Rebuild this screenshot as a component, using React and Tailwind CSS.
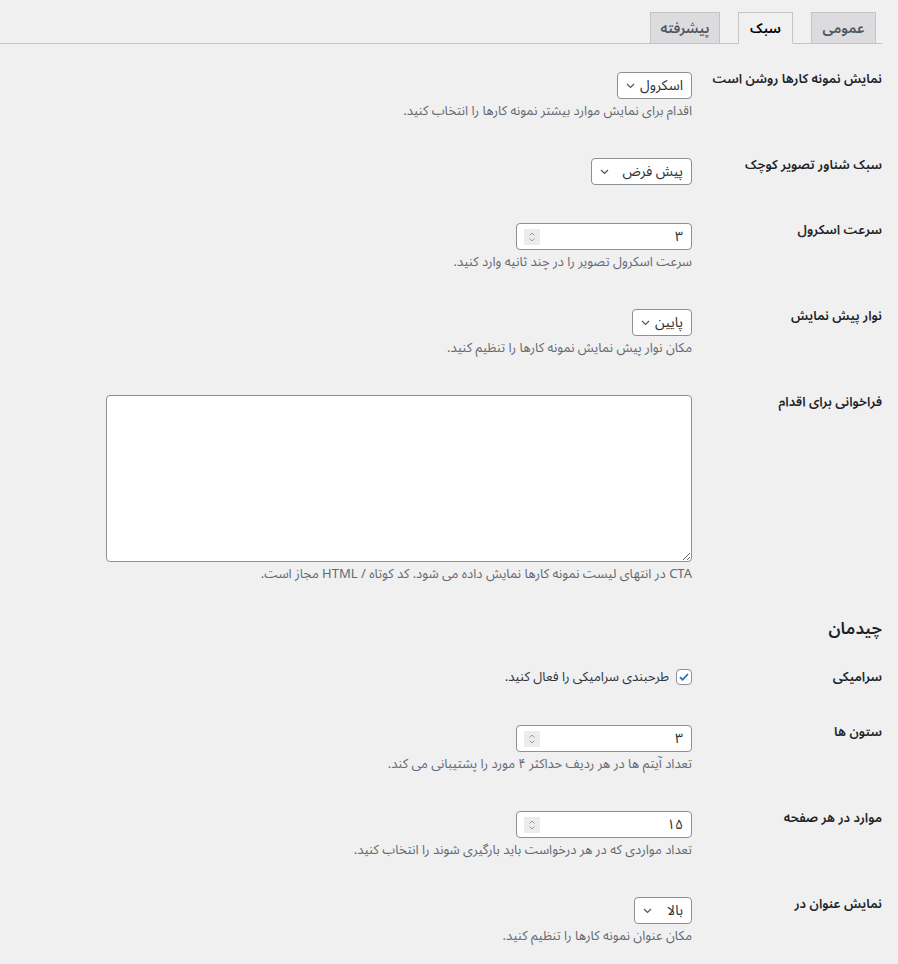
import React from 'react';

const font = { fontFamily: '"Noto Sans Arabic", "DejaVu Sans", sans-serif' };

const Chevron = () => (
    <svg width="9" height="6" viewBox="0 0 9 6" fill="none" className="shrink-0">
        <path d="M1 1l3.5 3.5L8 1" stroke="#50575e" strokeWidth="1.2" />
    </svg>
);

const Select = ({ value, width }) => (
    <div className={`flex h-[27px] items-center justify-between gap-[5px] rounded-[4px] border border-[#8c8f94] bg-white pr-[8px] pl-[8px] text-[14px] text-[#2c3338] ${width}`}>
        <span className="leading-[18px] whitespace-nowrap">{value}</span>
        <Chevron />
    </div>
);

const NumberInput = ({ value }) => (
    <div className="flex h-[27px] w-[176px] items-center justify-between rounded-[4px] border border-[#8c8f94] bg-white pr-[8px] pl-[7px] text-[14px] text-[#2c3338]">
        <span className="leading-[18px]">{value}</span>
        <div className="flex h-[16px] w-[16px] flex-col items-center justify-center gap-[2px] bg-[#ececec]">
            <svg width="6" height="4" viewBox="0 0 6 4" fill="none">
                <path d="M0.5 3.5L3 1l2.5 2.5" stroke="#8c8f94" strokeWidth="0.9" />
            </svg>
            <svg width="6" height="4" viewBox="0 0 6 4" fill="none">
                <path d="M0.5 0.5L3 3l2.5-2.5" stroke="#8c8f94" strokeWidth="0.9" />
            </svg>
        </div>
    </div>
);

const Description = ({ children }) => (
    <p className="mt-[4px] text-[13px] leading-[17px] text-[#646970]">{children}</p>
);

const Row = ({ label, labelTop = 'pt-[12px]', children }) => (
    <div className="flex">
        <div className={`w-[190px] shrink-0 text-[13px] leading-5 font-semibold text-[#1d2327] ${labelTop}`}>
            {label}
        </div>
        <div className="pt-[15px] pb-[23px]">{children}</div>
    </div>
);

const Tab = ({ label, active, width }) => (
    <div
        className={`-mb-px flex h-[32px] items-center justify-center border text-[14px] font-semibold ${width} ${
            active
                ? 'border-[#c3c4c7] border-b-[#f0f0f1] bg-[#f0f0f1] text-black'
                : 'border-[#c3c4c7] bg-[#dcdcde] text-[#50575e]'
        }`}
    >
        {label}
    </div>
);

export default function App() {
    return (
        <div dir="rtl" style={font} className="min-h-screen bg-[#f0f0f1] pr-4">
            <nav className="flex gap-[18px] border-b border-[#c3c4c7] pt-3 pr-[6px]">
                <Tab label="عمومی" width="w-[65px]" />
                <Tab label="سبک" width="w-[55px]" active />
                <Tab label="پیشرفته" width="w-[70px]" />
            </nav>

            <div className="pt-[13px]">
                <Row label="نمایش نمونه کارها روشن است">
                    <Select value="اسکرول" width="min-w-[68px] w-fit" />
                    <Description>اقدام برای نمایش موارد بیشتر نمونه کارها را انتخاب کنید.</Description>
                </Row>

                <Row label="سبک شناور تصویر کوچک">
                    <Select value="پیش فرض" width="w-[101px]" />
                </Row>

                <Row label="سرعت اسکرول">
                    <NumberInput value="۳" />
                    <Description>سرعت اسکرول تصویر را در چند ثانیه وارد کنید.</Description>
                </Row>

                <Row label="نوار پیش نمایش">
                    <Select value="پایین" width="min-w-[58px] w-fit" />
                    <Description>مکان نوار پیش نمایش نمونه کارها را تنظیم کنید.</Description>
                </Row>

                <Row label="فراخوانی برای اقدام">
                    <textarea
                        dir="ltr"
                        className="block h-[167px] w-[586px] rounded-[4px] border border-[#8c8f94] bg-white"
                    />
                    <Description>CTA در انتهای لیست نمونه کارها نمایش داده می شود. کد کوتاه / HTML مجاز است.</Description>
                </Row>
            </div>

            <h2 className="mt-[12px] mb-[12px] text-[17px] leading-[22px] font-semibold text-[#1d2327]">چیدمان</h2>

            <div>
                <Row label="سرامیکی" labelTop="pt-[15px]">
                    <div className="flex h-5 items-center gap-[7px] text-[13px] text-[#2c3338]">
                        <div className="flex h-[16px] w-[16px] shrink-0 items-center justify-center rounded-[4px] border border-[#8c8f94] bg-white">
                            <svg width="12" height="12" viewBox="0 0 12 12" fill="none">
                                <path d="M2 6.2l2.6 2.6L10 3" stroke="#2271b1" strokeWidth="1.8" />
                            </svg>
                        </div>
                        <span className="leading-[18px]">طرحبندی سرامیکی را فعال کنید.</span>
                    </div>
                </Row>

                <Row label="ستون ها">
                    <NumberInput value="۳" />
                    <Description>تعداد آیتم ها در هر ردیف حداکثر ۴ مورد را پشتیبانی می کند.</Description>
                </Row>

                <Row label="موارد در هر صفحه">
                    <NumberInput value="۱۵" />
                    <Description>تعداد مواردی که در هر درخواست باید بارگیری شوند را انتخاب کنید.</Description>
                </Row>

                <Row label="نمایش عنوان در">
                    <Select value="بالا" width="w-[58px]" />
                    <Description>مکان عنوان نمونه کارها را تنظیم کنید.</Description>
                </Row>
            </div>
        </div>
    );
}
